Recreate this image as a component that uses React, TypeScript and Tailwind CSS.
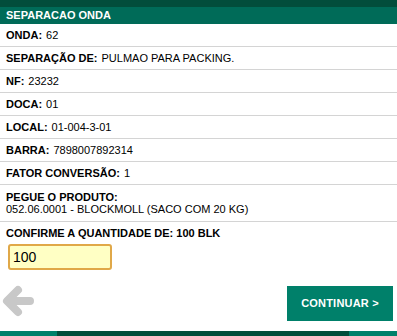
export default function App() {
  const rows: { label: string; value: string }[] = [
    { label: "ONDA:", value: "62" },
    { label: "SEPARAÇÃO DE:", value: "PULMAO PARA PACKING." },
    { label: "NF:", value: "23232" },
    { label: "DOCA:", value: "01" },
    { label: "LOCAL:", value: "01-004-3-01" },
    { label: "BARRA:", value: "7898007892314" },
    { label: "FATOR CONVERSÃO:", value: "1" },
  ];

  return (
    <div className="w-[397px] h-[336px] bg-white flex flex-col text-[11px] text-black font-['Liberation_Sans',Arial,sans-serif]">
      <div className="h-[7px] bg-[#024d3b]" />
      <div className="h-[17px] bg-[#006b58] text-white font-bold flex items-center px-[6px]">
        SEPARACAO ONDA
      </div>

      {rows.map((r) => (
        <div
          key={r.label}
          className="h-[23px] border-b border-[#d4d4d4] flex items-center px-[6px] first:h-[22px]"
        >
          <span className="font-bold">{r.label}</span>
          <span className="ml-[4px]">{r.value}</span>
        </div>
      ))}

      <div className="h-[37px] border-b border-[#d4d4d4] flex flex-col justify-center px-[6px] leading-[12px]">
        <span className="font-bold">PEGUE O PRODUTO:</span>
        <span>052.06.0001 - BLOCKMOLL (SACO COM 20 KG)</span>
      </div>

      <div className="px-[6px] pt-[5px] flex flex-col">
        <span className="font-bold leading-[12px]">CONFIRME A QUANTIDADE DE: 100 BLK</span>
        <input
          defaultValue="100"
          className="mt-[5px] ml-[2px] w-[104px] h-[26px] bg-[#ffffc4] border-2 border-[#e0a848] rounded-[3px] px-[3px] text-[14px] outline-none"
        />
      </div>

      <div className="flex-1 flex items-end justify-between pl-[2px] pr-[4px] pb-[10px]">
        <svg width="32" height="32" viewBox="0 0 32 32" className="mb-[4px]">
          <path
            d="M28 16 H8 M16 5 L5 16 L16 27"
            stroke="#c8c8c8"
            strokeWidth="8"
            strokeLinecap="round"
            strokeLinejoin="round"
            fill="none"
          />
        </svg>
        <button className="w-[106px] h-[35px] bg-[#00806a] text-white font-bold text-[11px] tracking-[0.2px]">
          CONTINUAR &gt;
        </button>
      </div>

      <div className="h-[5px] flex">
        <div className="w-[57px] bg-[#00806a]" />
        <div className="flex-1 bg-[#024d3b]" />
        <div className="w-[48px] bg-[#00806a]" />
      </div>
    </div>
  );
}
